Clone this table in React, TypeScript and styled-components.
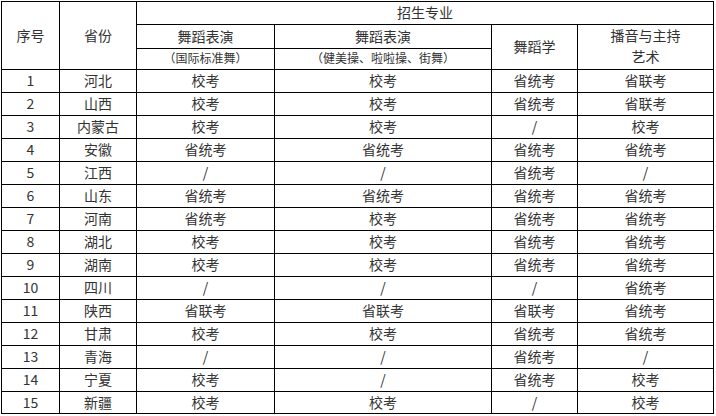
import React from 'react';
import styled, { createGlobalStyle } from 'styled-components';

const GlobalStyle = createGlobalStyle`
  html, body {
    margin: 0;
    padding: 0;
    background: #ffffff;
  }
`;

const Page = styled.div`
  box-sizing: border-box;
  min-height: 416px;
  padding: 1px 0 0 1px;
  font-family: 'Noto Sans CJK SC', 'Liberation Sans', sans-serif;
  color: #333333;
`;

// black background + 1px gaps draw the table rules
const Sheet = styled.div`
  display: grid;
  grid-template-columns: 57px 76px 137px 216px 85px 135px;
  grid-template-rows: 22px 23px 20px repeat(14, 22px) 21px;
  gap: 1px;
  padding: 1px;
  width: max-content;
  background: #000000;
`;

const Cell = styled.div<{ $small?: boolean }>`
  background: #ffffff;
  display: flex;
  flex-direction: column;
  align-items: center;
  justify-content: center;
  padding-bottom: 2px;
  box-sizing: border-box;
  min-height: 0;
  font-size: ${({ $small }) => ($small ? '12px' : '14px')};
  line-height: 16px;
  white-space: nowrap;
  overflow: hidden;
`;

const HeadCell = styled(Cell)<{ $row: string; $col: string }>`
  grid-row: ${({ $row }) => $row};
  grid-column: ${({ $col }) => $col};
`;

const Line = styled.span`
  display: block;
  line-height: 21px;
`;

type Row = [string, string, string, string, string, string];

const rows: Row[] = [
  ['1', '河北', '校考', '校考', '省统考', '省联考'],
  ['2', '山西', '校考', '校考', '省统考', '省联考'],
  ['3', '内蒙古', '校考', '校考', '/', '校考'],
  ['4', '安徽', '省统考', '省统考', '省统考', '省统考'],
  ['5', '江西', '/', '/', '省统考', '/'],
  ['6', '山东', '省统考', '省统考', '省统考', '省统考'],
  ['7', '河南', '省统考', '校考', '省统考', '省统考'],
  ['8', '湖北', '校考', '校考', '省统考', '省统考'],
  ['9', '湖南', '校考', '校考', '省统考', '省统考'],
  ['10', '四川', '/', '/', '/', '省统考'],
  ['11', '陕西', '省联考', '省联考', '省联考', '省统考'],
  ['12', '甘肃', '校考', '校考', '省统考', '省统考'],
  ['13', '青海', '/', '/', '省统考', '/'],
  ['14', '宁夏', '校考', '/', '省统考', '校考'],
  ['15', '新疆', '校考', '校考', '/', '校考'],
];

export default function App() {
  return (
    <>
      <GlobalStyle />
      <Page>
        <Sheet>
          <HeadCell $row="1 / span 3" $col="1">
            序号
          </HeadCell>
          <HeadCell $row="1 / span 3" $col="2">
            省份
          </HeadCell>
          <HeadCell $row="1" $col="3 / span 4">
            招生专业
          </HeadCell>
          <HeadCell $row="2" $col="3">
            舞蹈表演
          </HeadCell>
          <HeadCell $row="2" $col="4">
            舞蹈表演
          </HeadCell>
          <HeadCell $row="2 / span 2" $col="5">
            舞蹈学
          </HeadCell>
          <HeadCell $row="2 / span 2" $col="6">
            <Line>播音与主持</Line>
            <Line>艺术</Line>
          </HeadCell>
          <HeadCell $small $row="3" $col="3">
            （国际标准舞）
          </HeadCell>
          <HeadCell $small $row="3" $col="4">
            （健美操、啦啦操、街舞）
          </HeadCell>
          {rows.map((row) =>
            row.map((value, i) => <Cell key={`${row[0]}-${i}`}>{value}</Cell>)
          )}
        </Sheet>
      </Page>
    </>
  );
}
